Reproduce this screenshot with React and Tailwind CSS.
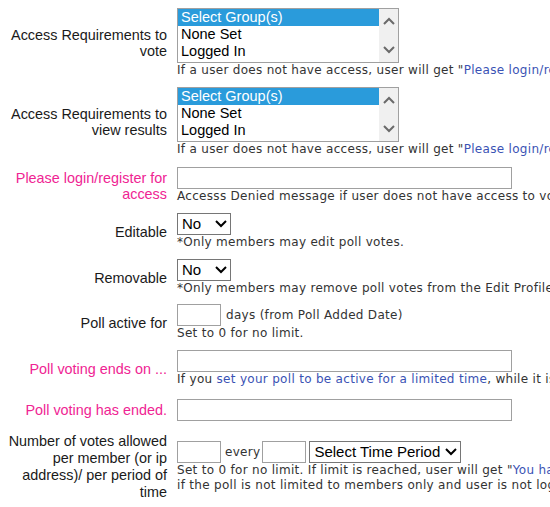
import React from "react";

const sans = { fontFamily: '"Liberation Sans", Arial, sans-serif' };

const Chevron = ({ up = false, className = "" }) => (
  <svg width="12" height="8" viewBox="0 0 12 8" className={className}>
    <path
      d={up ? "M1 7 L6 2 L11 7" : "M1 1 L6 6 L11 1"}
      fill="none"
      stroke="currentColor"
      strokeWidth="2"
    />
  </svg>
);

const Help = ({ children }) => (
  <div className="whitespace-nowrap font-['DejaVu_Sans',Verdana,sans-serif] text-[12px] leading-[15px] tracking-[0.3px] text-[#333]">
    {children}
  </div>
);

const Link = ({ children }) => <span className="text-[#3a52b4]">{children}</span>;

const ListBox = () => (
  <div className="flex h-[55px] w-[222px] shrink-0 overflow-hidden border border-[#a0a0a0] bg-white font-['Liberation_Sans',Arial,sans-serif] text-[14.5px] leading-[17px] text-black">
    <div className="flex-1">
      <div className="bg-[#2a9bdb] pl-[3px] text-white">Select Group(s)</div>
      <div className="pl-[3px]">None Set</div>
      <div className="pl-[3px]">Logged In</div>
    </div>
    <div className="flex w-[19px] flex-col items-center justify-between bg-[#f0f0f0] py-[8px] text-[#6a6a6a]">
      <Chevron up />
      <Chevron />
    </div>
  </div>
);

const Dropdown = ({ value, width }) => (
  <div
    className={`flex h-[22px] ${width} shrink-0 items-center justify-between border border-[#767676] bg-white pl-[4px] pr-[3px] font-['Liberation_Sans',Arial,sans-serif] text-[15px] text-black`}
  >
    <span>{value}</span>
    <Chevron className="text-black" />
  </div>
);

const TextInput = ({ width }) => (
  <div className={`h-[22px] ${width} shrink-0 border border-[#a0a0a0] bg-white`} />
);

const Row = ({ label, pink, children, leading = "leading-[16px]", className = "" }) => (
  <div className={`flex items-center ${className}`}>
    <div
      className={`mr-[10px] w-[167px] shrink-0 text-right text-[14.4px] ${leading} ${
        pink ? "text-[#ef2493]" : "text-[#1a1a1a]"
      }`}
      style={sans}
    >
      {label}
    </div>
    <div className="flex flex-col">{children}</div>
  </div>
);

export default function App() {
  return (
    <div className="h-[507px] w-[550px] overflow-hidden bg-white pt-[8px]">
      <div className="flex flex-col">
        <Row label={<>Access Requirements to<br />vote</>}>
          <ListBox />
          <Help>
            If a user does not have access, user will get "<Link>Please login/register for access</Link>"
          </Help>
        </Row>

        <Row className="mt-[9px]" label={<>Access Requirements to<br />view results</>}>
          <ListBox />
          <Help>
            If a user does not have access, user will get "<Link>Please login/register for access</Link>"
          </Help>
        </Row>

        <Row className="mt-[10px]" pink label={<>Please login/register for<br />access</>}>
          <TextInput width="w-[335px]" />
          <Help>Accesss Denied message if user does not have access to vote.</Help>
        </Row>

        <Row className="mt-[9px]" label="Editable">
          <Dropdown value="No" width="w-[54px]" />
          <Help>*Only members may edit poll votes.</Help>
        </Row>

        <Row className="mt-[9px]" label="Removable">
          <Dropdown value="No" width="w-[54px]" />
          <Help>*Only members may remove poll votes from the Edit Profile page.</Help>
        </Row>

        <Row className="mt-[8px]" label="Poll active for">
          <div className="flex items-center gap-[5px]">
            <TextInput width="w-[44px]" />
            <Help>days (from Poll Added Date)</Help>
          </div>
          <Help>Set to 0 for no limit.</Help>
        </Row>

        <Row className="mt-[9px]" pink label="Poll voting ends on ...">
          <TextInput width="w-[335px]" />
          <Help>
            If you <Link>set your poll to be active for a limited time</Link>, while it is not active
          </Help>
        </Row>

        <Row className="mt-[12px]" pink label="Poll voting has ended.">
          <TextInput width="w-[335px]" />
        </Row>

        <Row
          className="mt-[12px]"
          leading="leading-[17px]"
          label={<>Number of votes allowed<br />per member (or ip<br />address)/ per period of<br />time</>}
        >
          <div className="flex items-center">
            <TextInput width="w-[44px]" />
            <span className="ml-[4px] mr-[2px]"><Help>every</Help></span>
            <TextInput width="w-[44px]" />
            <div className="ml-[3px]">
              <Dropdown value="Select Time Period" width="w-[152px]" />
            </div>
          </div>
          <Help>
            Set to 0 for no limit. If limit is reached, user will get "<Link>You have reached the limit</Link>"
          </Help>
          <Help>if the poll is not limited to members only and user is not logged in</Help>
        </Row>
      </div>
    </div>
  );
}
